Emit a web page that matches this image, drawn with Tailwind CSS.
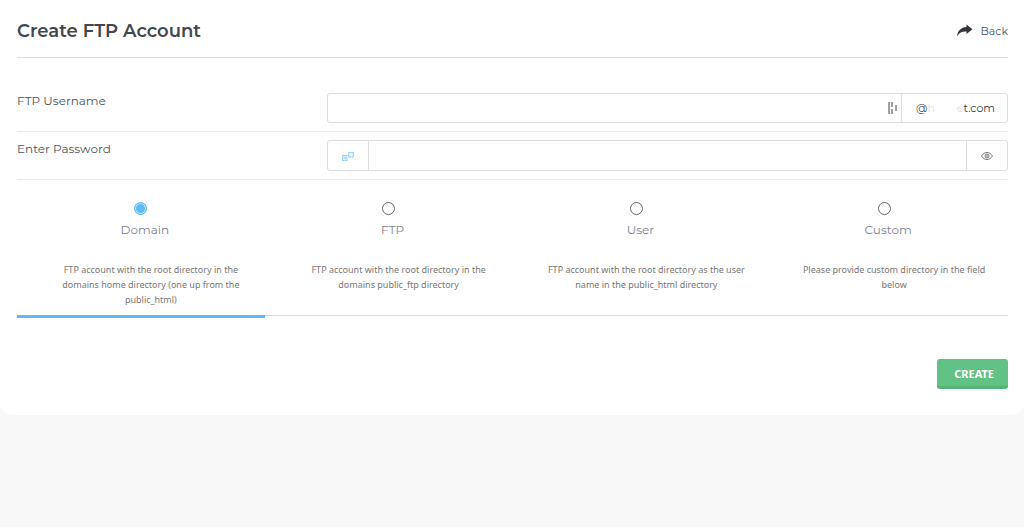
<!DOCTYPE html>
<html lang="en">
<head>
<meta charset="utf-8">
<meta name="viewport" content="width=device-width, initial-scale=1">
<title>Create FTP Account</title>
<script src="https://cdn.jsdelivr.net/npm/@tailwindcss/browser@4"></script>
</head>
<body class="min-h-screen bg-[#f8f8f8] font-['Montserrat',Inter,sans-serif] text-[#4d5461]">
<main class="rounded-b-xl bg-white pr-4 pb-[26px] pl-[17px]">
  <header class="flex h-[58px] items-center justify-between border-b border-[#dbe3ea] pt-1">
    <h1 class="text-[18px] leading-6 font-semibold text-[#43474b]">Create FTP Account</h1>
    <a href="#" class="flex items-center gap-2 text-[11px] leading-4">
      <svg class="h-4 w-4" viewBox="0 0 16 16" fill="#34373d" aria-hidden="true"><path d="M9.500 1.500 L15.500 6.200 L9.500 11 V8.500 C5 8.300 2.500 9.600 .1 13.200 C.5 8.100 4 4.400 9.500 4.100 Z"/></svg>
      Back
    </a>
  </header>
  <form class="pt-[26px]">
    <div class="flex items-start border-b border-[#ececec] pt-[9px] pb-2">
      <label for="username" class="w-[310px] shrink-0 text-[12px] leading-4">FTP Username</label>
      <div class="flex h-[30px] min-w-0 flex-1 overflow-hidden rounded-[3px] border border-[#dedede]">
        <input id="username" type="text" class="min-w-0 flex-1 px-3 text-[12px] outline-none">
        <svg class="mr-[2px] h-7 w-3 shrink-0" viewBox="0 0 12 28" fill="#a0a0a0" aria-hidden="true"><path d="M1 8h2v12H1zM4 8h2v5H4zM4 15h2v5H4zM8 11h2v6H8z"/></svg>
        <span class="flex w-[106px] shrink-0 items-center justify-between border-l border-[#dedede] pr-3 pl-[14px] text-[11px] text-[#33373d]"><span>@<span class="text-[#e2e2e2]">h</span></span><span><span class="text-[#e2e2e2]">e</span>t.com</span></span>
      </div>
    </div>
    <div class="flex items-start border-b border-[#ececec] pt-2 pb-2">
      <label for="password" class="w-[310px] shrink-0 pt-px text-[12px] leading-4">Enter Password</label>
      <div class="flex h-[31px] min-w-0 flex-1 overflow-hidden rounded-[3px] border border-[#dedede]">
        <button type="button" aria-label="Generate password" class="flex w-[41px] shrink-0 items-center justify-center border-r border-[#dedede]">
          <svg class="h-3 w-3" viewBox="0 0 12 12" aria-hidden="true"><path d="M0 5h5.500v6H0zM6 2h6v5.500H6z" fill="#d4ecfd"/><path d="M.5 5.500h4.500v5H.5zM6.500 2.500h5v4.500h-5z" fill="none" stroke="#8accfa" stroke-dasharray="2 1"/><path d="M2 8h2" stroke="#8accfa"/><path d="M8 4h2v2h-2z" fill="#fff"/></svg>
        </button>
        <input id="password" type="password" class="min-w-0 flex-1 px-3 text-[12px] outline-none">
        <button type="button" aria-label="Show password" class="flex w-[41px] shrink-0 items-center justify-center border-l border-[#dedede]">
          <svg class="h-3 w-3" viewBox="0 0 12 12" fill="none" stroke="#777" aria-hidden="true"><path d="M.5 6C3.500 1.300 8.500 1.300 11.500 6C8.500 10.700 3.500 10.700 .5 6Z"/><circle cx="6" cy="6" r="2"/><circle cx="6" cy="6" r=".4"/></svg>
        </button>
      </div>
    </div>
    <div role="radiogroup" aria-label="Root directory" class="grid grid-cols-4 text-center">
      <label class="flex h-[136px] flex-col items-center border-b border-[#dcdcdc] pt-[22px]">
        <input type="radio" name="root" checked class="h-[13px] w-[13px] shrink-0 appearance-none rounded-full border border-[#5fbaf5] bg-[#5fbaf5] ring-1 ring-[#c8e7fc] ring-inset">
        <span class="mt-[7px] pl-2 text-[12px] leading-4 text-[#7d8394]">Domain</span>
        <span class="mt-6 pr-4 pl-9 font-['Noto_Sans',sans-serif] text-[9px] leading-[15px] text-[#777]">FTP account with the root directory in the domains home directory (one up from the public_html)</span>
        <span class="mt-auto -mb-[3px] h-[3px] w-full shrink-0 bg-[#5fbaf5]"></span>
      </label>
      <label class="flex h-[136px] flex-col items-center border-b border-[#dcdcdc] pt-[22px]">
        <input type="radio" name="root" class="h-[13px] w-[13px] shrink-0 appearance-none rounded-full border border-[#666] bg-white">
        <span class="mt-[7px] pl-2 text-[12px] leading-4 text-[#7d8394]">FTP</span>
        <span class="mt-6 pr-4 pl-9 font-['Noto_Sans',sans-serif] text-[9px] leading-[15px] text-[#777]">FTP account with the root directory in the domains public_ftp directory</span>
      </label>
      <label class="flex h-[136px] flex-col items-center border-b border-[#dcdcdc] pt-[22px]">
        <input type="radio" name="root" class="h-[13px] w-[13px] shrink-0 appearance-none rounded-full border border-[#666] bg-white">
        <span class="mt-[7px] pl-2 text-[12px] leading-4 text-[#7d8394]">User</span>
        <span class="mt-6 pr-2 pl-7 font-['Noto_Sans',sans-serif] text-[9px] leading-[15px] text-[#777]">FTP account with the root directory as the user name in the public_html directory</span>
      </label>
      <label class="flex h-[136px] flex-col items-center border-b border-[#dcdcdc] pt-[22px]">
        <input type="radio" name="root" class="h-[13px] w-[13px] shrink-0 appearance-none rounded-full border border-[#666] bg-white">
        <span class="mt-[7px] pl-2 text-[12px] leading-4 text-[#7d8394]">Custom</span>
        <span class="mt-6 pr-4 pl-9 font-['Noto_Sans',sans-serif] text-[9px] leading-[15px] text-[#777]">Please provide custom directory in the field below</span>
      </label>
    </div>
    <div class="mt-[43px] flex justify-end">
      <button type="submit" class="h-[30px] rounded-[3px] border-b-[3px] border-[#55b378] bg-[#62c185] pt-[3px] pr-[14px] pl-[17px] font-['Noto_Sans',sans-serif] text-[11px] leading-4 font-bold text-white">CREATE</button>
    </div>
  </form>
</main>
</body>
</html>
